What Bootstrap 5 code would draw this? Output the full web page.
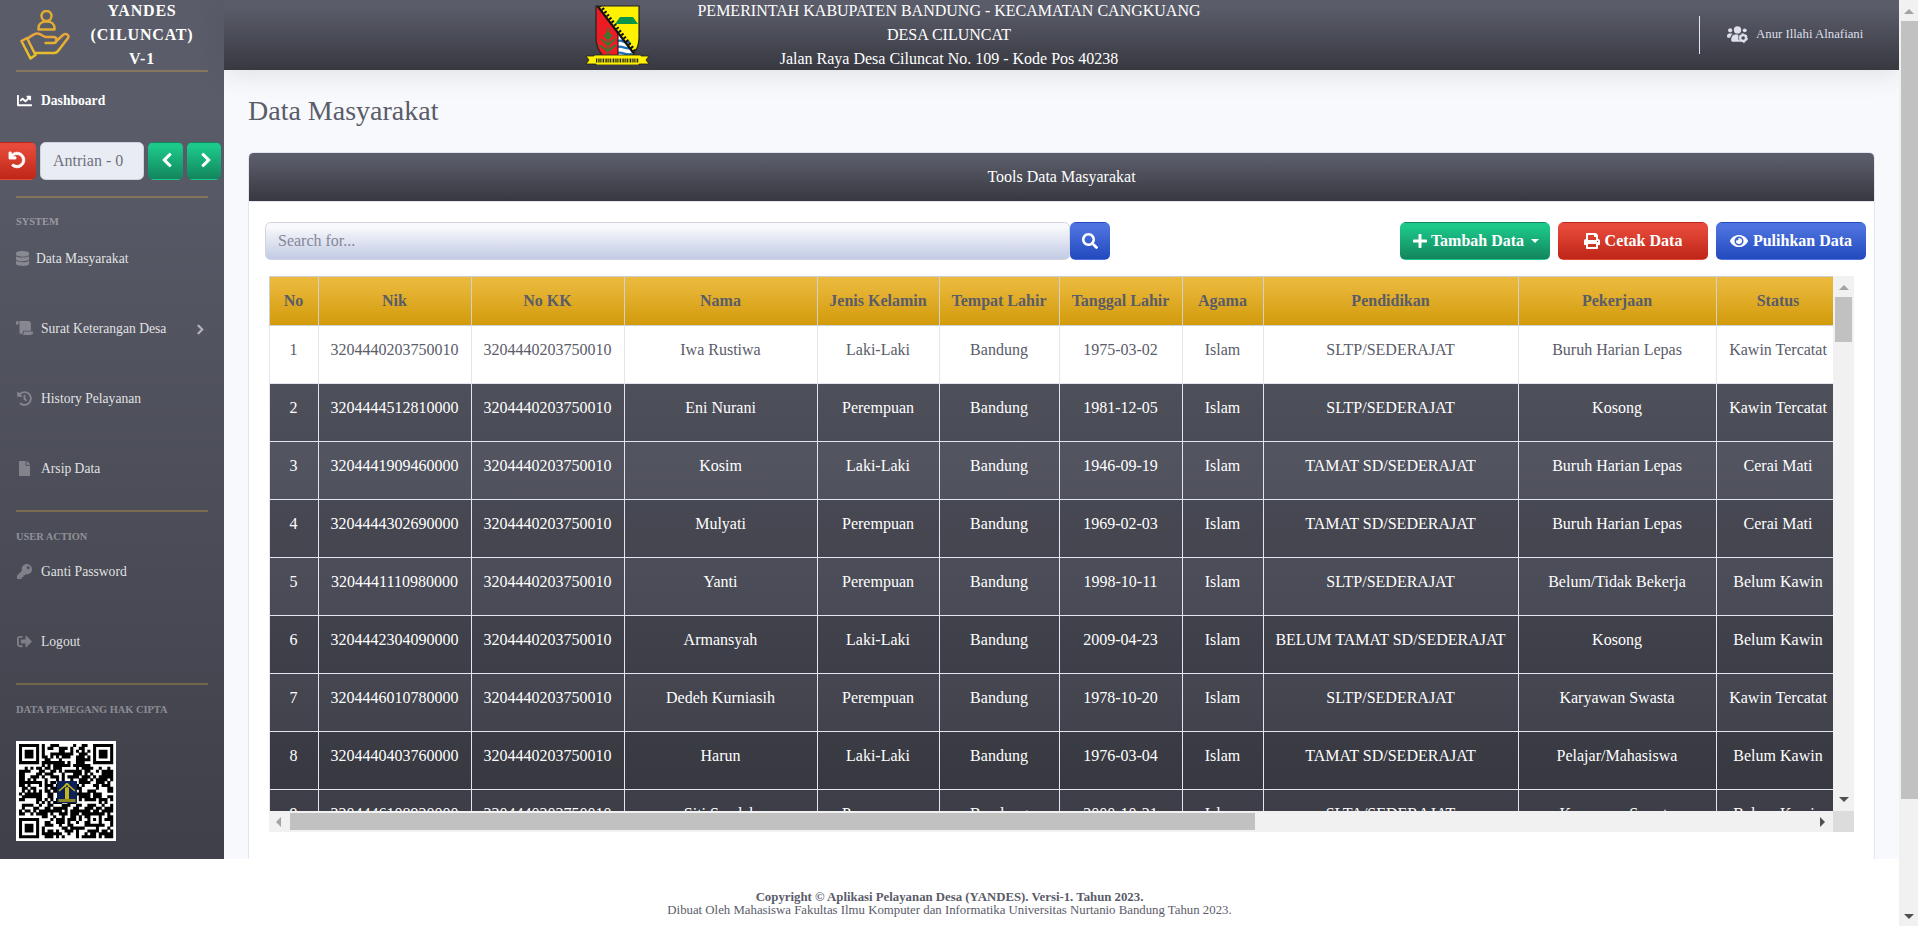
<!DOCTYPE html>
<html lang="id">
<head>
<meta charset="utf-8">
<title>YANDES - Data Masyarakat</title>
<link rel="stylesheet" href="https://cdn.jsdelivr.net/npm/bootstrap@5.3.0/dist/css/bootstrap.min.css">
<style>
body{font-family:"Liberation Serif","Times New Roman",serif;font-size:16px;line-height:24px;color:#5a5c69;background:#fff;height:926px;overflow:hidden}
svg.ic{fill:currentColor;display:inline-block;height:1em;flex:none}
svg.bold{stroke:currentColor;stroke-width:28;overflow:visible}
.viewport{height:926px}
.upper{height:859px;overflow:hidden;background:#f8f9fc}
.side{width:224px;height:1062px;background:linear-gradient(180deg,#5a5c69 10%,#373840 100%);flex:none}
.brand{height:70px;color:#fff;font-weight:700;letter-spacing:.8px}
.brand-name{width:144px;margin-top:-1px}
.rule{height:2px;margin:0 16px;background:#f6c23e;opacity:.27}
.item{height:70px;padding-left:16px;padding-top:2px;font-size:13.6px;color:rgba(255,255,255,.85)}
.item .ib{width:17px;margin-right:8px;display:flex;justify-content:center;color:rgba(255,255,255,.3);font-size:15px;margin-top:-2px}
.heading{height:16px;line-height:17px;padding-left:16px;font-size:10.4px;font-weight:700;color:rgba(255,255,255,.4)}
.btn{--bs-btn-border-color:transparent;color:#fff!important;border-radius:5.6px}
.g-green{background:linear-gradient(180deg,#1cc88a 10%,#13855c 100%)}
.g-red{background:linear-gradient(180deg,#e74a3b 10%,#be2617 100%)}
.g-blue{background:linear-gradient(180deg,#4e73df 10%,#224abe 100%)}
.g-dark{background:linear-gradient(180deg,#5a5c69 10%,#373840 100%)}
.queue{height:38px;margin:14px 0 16px -6px}
.queue .btn{height:38px;padding:0 0 2px;display:flex;align-items:center;justify-content:center}
.queue .field{width:104px;height:38px;margin:0 4px;padding:6px 12px;background:#eaecf4;border:1px solid #d1d3e2;border-radius:5.6px;color:#6e707e}
.topbar{height:70px;color:#fff;box-shadow:0 .15rem 1.75rem 0 rgba(58,59,69,.15)}
.crest{width:67px;height:60px;margin-left:360px}
.office{width:510px;margin-left:43px}
.user{margin-left:auto;border-left:1px solid #e3e6f0;height:38px;width:200px;padding-left:27px;padding-bottom:2px;font-size:12.8px;color:#dddfeb}
.title{font-size:28px;line-height:34px;margin:24px 0 24px;padding-left:24px}
.panel{width:1627px;height:900px;margin-left:24px;border:1px solid #e3e6f0;border-radius:5.6px;background:#fff;overflow:hidden}
.panel-top{height:49px;line-height:48px;border-bottom:1px solid #e3e6f0;color:#fff}
.searchbox{width:805px;height:38px;border:1px solid #d1d3e2;border-radius:5.6px;padding:6px 12px;background:linear-gradient(180deg,#f8f9fc 10%,#c2cbe5 100%);color:#858796}
.tool{width:150px;height:38px;font-weight:700;padding:0;display:flex;align-items:center;justify-content:center;gap:5px}
.tool.dropdown-toggle{gap:4px;padding-left:2px}
.tool.dropdown-toggle::after{margin-left:3px}
.scroller{display:grid;grid-template-columns:1564px 21px;grid-template-rows:535px 21px;width:1585px;margin-left:20px}
.win{overflow:hidden}
.data{width:1571px;table-layout:fixed;border-collapse:collapse;text-align:center;white-space:nowrap}
.data th,.data td{border:1px solid #e3e6f0;padding:12px 1px 12px 0;vertical-align:top}
.data thead tr{height:49px;background:linear-gradient(180deg,#eab83b 10%,#d29a0a 100%)}
.data thead th{border-color:#cfd0d2;line-height:24px}
.data tbody{background:linear-gradient(180deg,#5a5c69,#373840) 0 0/100% 580px no-repeat;color:#fff}
.data tbody tr{height:58px}
.data tbody tr:first-child td{background:#fff;color:#5a5c69}
.data tbody tr:nth-child(even) td{background:rgba(0,0,0,.1)}
.bar{background:#f1f1f1;display:flex}
.bar.v{flex-direction:column;align-items:center}
.bar.h{align-items:center}
.thumb{background:#c1c1c1}
.arr{width:0;height:0;border:5px solid transparent}
.up{border-top:0;border-bottom:5px solid #a3a3a3}
.dn{border-bottom:0;border-top:5px solid #505050}
.lf{border-left:0;border-right:5px solid #a3a3a3}
.rt{border-right:0;border-left:5px solid #505050}
.pagebar{width:19px;height:926px;flex:none}
.foot{height:67px;padding-top:32px;font-size:12.8px;line-height:12.8px}
</style>
</head>
<body>
<svg class="d-none">
<symbol id="undo" viewBox="0 0 512 512" overflow="visible"><path d="M212.333 224.333H12c-6.627 0-12-5.373-12-12V12C0 5.373 5.373 0 12 0h48c6.627 0 12 5.373 12 12v78.112C117.773 39.279 184.26 7.47 258.175 8.007c136.906.994 246.448 111.623 246.157 248.532C504.041 393.258 393.12 504 256.333 504c-64.089 0-122.496-24.313-166.51-64.215-5.099-4.622-5.334-12.554-.467-17.42l33.967-33.967c4.474-4.474 11.662-4.717 16.401-.525C170.76 415.336 211.58 432 256.333 432c97.268 0 176-78.716 176-176 0-97.267-78.716-176-176-176-58.496 0-110.28 28.476-142.274 72.333h98.274c6.627 0 12 5.373 12 12v48c0 6.627-5.373 12-12 12z"/></symbol>
<symbol id="chev" viewBox="0 0 320 512" overflow="visible"><path d="M285.476 272.971L91.132 467.314c-9.373 9.373-24.569 9.373-33.941 0l-22.667-22.667c-9.357-9.357-9.375-24.522-.04-33.901L188.505 256 34.484 101.255c-9.335-9.379-9.317-24.544.04-33.901l22.667-22.667c9.373-9.373 24.569-9.373 33.941 0L285.475 239.03c9.373 9.372 9.373 24.568.001 33.941z"/></symbol>
</svg>
<div class="viewport d-flex">
 <div class="flex-grow-1">
  <div class="upper d-flex">
   <nav class="side">
    <div class="brand d-flex">
     <svg width="50" height="50" viewBox="0 0 50 50" style="margin:10px 0 0 20px;flex:none" fill="none" stroke-width="2.5" stroke-linejoin="round" stroke-linecap="round">
      <defs><linearGradient id="gold" x1="0" y1="0" x2="0" y2="1"><stop offset="0" stop-color="#e8a33a"/><stop offset="1" stop-color="#e6c526"/></linearGradient></defs>
      <g stroke="#e2ac30"><circle cx="26.500" cy="6" r="5"/><path d="M18.500 19.500v-1.500c0-4 3.500-6.500 8-6.500s8 2.500 8 6.500v1.500z"/></g>
      <path stroke="url(#gold)" d="M1.500 31l5.500-3 8.500 17-5 3.500zM7.500 28.500c4-3 7-5 10-5 4 0 5 3.500 9 3.500h7c4 0 4 6 0 6h-8M37 30.500l6-5.500c3-2.500 6.500 0 5 3L38 41c-1 1.500-2 2-4 2H15.500"/>
     </svg>
     <div class="brand-name text-center">YANDES<br>(CILUNCAT)<br>V-1</div>
    </div>
    <div class="rule"></div>
    <div class="item d-flex align-items-center fw-bold text-white" style="height:56px"><span class="ib text-white"><svg class="ic" viewBox="0 0 512 512"><path d="M496 384H64V80c0-8.840-7.160-16-16-16H16C7.160 64 0 71.160 0 80v336c0 17.670 14.330 32 32 32h464c8.840 0 16-7.160 16-16v-32c0-8.840-7.160-16-16-16zM464 96H345.940c-21.380 0-32.090 25.850-16.970 40.970l32.400 32.400L288 242.750l-73.370-73.370c-12.500-12.500-32.760-12.500-45.250 0l-68.690 68.690c-6.250 6.250-6.250 16.380 0 22.630l22.620 22.620c6.250 6.250 16.380 6.250 22.630 0L192 237.250l73.370 73.370c12.500 12.500 32.760 12.500 45.250 0l96-96 32.400 32.400c15.120 15.120 40.970 4.410 40.970-16.970V112c.010-8.840-7.150-16-15.990-16z"/></svg></span>Dashboard</div>
    <div class="queue d-flex">
     <a class="btn g-red" style="width:42px;padding-left:4px"><svg class="ic bold" viewBox="0 0 512 512"><use href="#undo"/></svg></a>
     <div class="field">Antrian - 0</div>
     <a class="btn g-green" style="width:35px;margin-right:4px;padding-left:2px"><svg class="ic bold" viewBox="0 0 320 512" style="transform:scaleX(-1)"><use href="#chev"/></svg></a>
     <a class="btn g-green" style="width:34px;padding-left:3px"><svg class="ic bold" viewBox="0 0 320 512"><use href="#chev"/></svg></a>
    </div>
    <div class="rule"></div>
    <div class="heading" style="margin-top:15px">SYSTEM</div>
    <div class="item d-flex align-items-center" style="height:58px;margin-bottom:6px"><span class="ib" style="width:13px;margin-right:7px"><svg class="ic" viewBox="0 0 448 512"><path d="M448 73.143v45.714C448 159.143 347.667 192 224 192S0 159.143 0 118.857V73.143C0 32.857 100.333 0 224 0s224 32.857 224 73.143zM448 176v102.857C448 319.143 347.667 352 224 352S0 319.143 0 278.857V176c48.125 33.143 136.208 48.572 224 48.572S399.874 209.143 448 176zm0 160v102.857C448 479.143 347.667 512 224 512S0 479.143 0 438.857V336c48.125 33.143 136.208 48.572 224 48.572S399.874 369.143 448 336z"/></svg></span>Data Masyarakat</div>
    <div class="item d-flex align-items-center"><span class="ib"><svg class="ic" viewBox="0 0 640 512" style="height:14px"><path d="M48 0C21.530 0 0 21.530 0 48v64c0 8.840 7.160 16 16 16h80V48C96 21.530 74.470 0 48 0zm208 412.570V352h288V96c0-52.940-43.060-96-96-96H111.590C121.740 13.410 128 29.920 128 48v368c0 38.870 34.650 69.650 74.750 63.120C234.220 474 256 444.460 256 412.570zM288 384v32c0 52.930-43.060 96-96 96h336c61.860 0 112-50.140 112-112 0-8.840-7.160-16-16-16H288z"/></svg></span>Surat Keterangan Desa<svg class="ic bold ms-auto" viewBox="0 0 320 512" style="height:11px;margin-right:20px;opacity:.65"><use href="#chev"/></svg></div>
    <div class="item d-flex align-items-center"><span class="ib"><svg class="ic" viewBox="0 0 512 512"><path d="M504 255.531c.253 136.640-111.180 248.372-247.820 248.468-59.015.042-113.223-20.530-155.822-54.911-11.077-8.940-11.905-25.541-1.839-35.607l11.267-11.267c8.609-8.609 22.353-9.551 31.891-1.984C173.062 425.135 212.781 440 256 440c101.705 0 184-82.311 184-184 0-101.705-82.311-184-184-184-48.814 0-93.149 18.969-126.068 49.932l50.754 50.754c10.080 10.080 2.941 27.314-11.313 27.314H24c-8.837 0-16-7.163-16-16V38.627c0-14.254 17.234-21.393 27.314-11.314l49.372 49.372C129.209 34.136 189.552 8 256 8c136.810 0 247.747 110.780 248 247.531zm-180.912 78.784l9.823-12.630c8.138-10.463 6.253-25.542-4.210-33.679L288 256.349V152c0-13.255-10.745-24-24-24h-16c-13.255 0-24 10.745-24 24v135.651l65.409 50.874c10.463 8.137 25.541 6.253 33.679-4.210z"/></svg></span>History Pelayanan</div>
    <div class="item d-flex align-items-center"><span class="ib"><svg class="ic" viewBox="0 0 384 512"><path d="M224 136V0H24C10.700 0 0 10.700 0 24v464c0 13.300 10.700 24 24 24h336c13.300 0 24-10.700 24-24V160H248c-13.200 0-24-10.800-24-24zm160-14.100v6.100H256V0h6.100c6.400 0 12.500 2.500 17 7l97.900 98c4.500 4.500 7 10.600 7 16.900z"/></svg></span>Arsip Data</div>
    <div class="rule" style="margin-top:7px"></div>
    <div class="heading" style="margin-top:16px">USER ACTION</div>
    <div class="item d-flex align-items-center" style="height:54px;margin-bottom:8px"><span class="ib"><svg class="ic" viewBox="0 0 512 512"><path d="M512 176.001C512 273.203 433.202 352 336 352c-11.220 0-22.190-1.062-32.827-3.069l-24.012 27.014A23.999 23.999 0 0 1 261.223 384H224v40c0 13.255-10.745 24-24 24h-40v40c0 13.255-10.745 24-24 24H24c-13.255 0-24-10.745-24-24v-78.059c0-6.365 2.529-12.470 7.029-16.971l161.802-161.802C163.108 213.814 160 195.271 160 176 160 78.798 238.797.001 335.999 0 433.488-.001 512 78.511 512 176.001zM336 128c0 26.510 21.490 48 48 48s48-21.490 48-48-21.490-48-48-48-48 21.490-48 48z"/></svg></span>Ganti Password</div>
    <div class="item d-flex align-items-center"><span class="ib"><svg class="ic" viewBox="0 0 512 512"><path d="M497 273L329 441c-15 15-41 4.500-41-17v-96H152c-13.300 0-24-10.700-24-24v-96c0-13.300 10.700-24 24-24h136V88c0-21.400 25.900-32 41-17l168 168c9.300 9.400 9.300 24.600 0 34zM192 436v-40c0-6.600-5.400-12-12-12H96c-17.700 0-32-14.300-32-32V160c0-17.700 14.300-32 32-32h84c6.600 0 12-5.400 12-12V76c0-6.600-5.400-12-12-12H96c-53 0-96 43-96 96v192c0 53 43 96 96 96h84c6.600 0 12-5.400 12-12z"/></svg></span>Logout</div>
    <div class="rule" style="margin-top:7px"></div>
    <div class="heading" style="margin-top:16px">DATA PEMEGANG HAK CIPTA</div>
    <svg id="qr" class="d-block" width="100" height="100" viewBox="0 0 100 100" style="margin:24px 0 0 16px"><rect width="100" height="100" fill="#fff"/><path id="qrm"/>
     <rect x="41" y="40" width="20" height="22" fill="#0b2158"/><g fill="none" stroke="#c4b51c"><path d="M43 50l8-7 8 7" stroke-width="1.600"/><circle cx="51" cy="44.500" r="2"/><path d="M51 47v12" stroke-width="4"/><path d="M42.500 59.500h17" stroke-width="3" stroke="#8d8725"/></g></svg>
   </nav>
   <main class="flex-grow-1">
    <header class="topbar g-dark d-flex align-items-center">
     <svg class="crest flex-shrink-0" viewBox="0 0 67 60">
      <defs><clipPath id="sh"><path d="M12 1h43v32c0 14-9 22-21.500 28C21 55 12 47 12 33z"/></clipPath></defs>
      <g clip-path="url(#sh)"><path fill="#fff200" d="M12 0h44v60H12z"/><path fill="#ed1c24" d="M12 0v60h22V28z"/><path fill="#fff" d="M34 28v32l16-8-2-8z"/><path stroke="#1c75bc" stroke-width="2.400" fill="none" d="M34 36c4-2 6 3 12 1M34 42c4-2 7 3 14 1M34 48c4-2 7 3 14 1M34 54c4-2 5 2 10 0"/><path stroke="#111" stroke-width="2.200" fill="none" d="M12-1l39 51"/><path stroke="#111" stroke-width="3" stroke-dasharray="2 2" fill="none" d="M16 0l38 50"/><path stroke="#111" d="M34 28v32"/></g>
      <path fill="#0a9447" d="M36 12h13l5 7H31z"/><path stroke="#2f7d32" stroke-width="1.800" fill="none" d="M24 23v32M24 27l-3 4M24 27l3 4M17 34l7 6 7-6M15 40l9 6 8-6M20 30l4 4 4-4"/>
      <path d="M12 1h43v32c0 14-9 22-21.500 28C21 55 12 47 12 33z" fill="none" stroke="#222" stroke-width="1.200"/>
      <path d="M2 51h8v-1h47v1h8l-3 4 3 4H55v1H12v-1H2l3-4z" fill="#fff200" stroke="#222" stroke-width=".8"/><path d="M12 55.500h43" stroke="#222" stroke-width="4" stroke-dasharray="1.300 .8 .7 .6"/>
     </svg>
     <div class="office text-center">PEMERINTAH KABUPATEN BANDUNG - KECAMATAN CANGKUANG<br>DESA CILUNCAT<br>Jalan Raya Desa Ciluncat No. 109 - Kode Pos 40238</div>
     <div class="user d-flex align-items-center"><svg class="ic" width="21" viewBox="0 0 640 512" style="height:17px;margin-right:8px"><circle cx="96" cy="130" r="64"/><circle cx="320" cy="116" r="112"/><circle cx="540" cy="130" r="60"/><path d="M0 320c0-60 30-96 64-96h64c20 0 34 6 46 18-38 24-66 62-72 110H32c-18 0-32-14-32-32zM128 432c0-100 40-176 128-176h96c-30 60-10 180 60 224H176c-26 0-48-22-48-48z"/><circle cx="492" cy="364" r="90" fill="none" stroke="currentColor" stroke-width="70"/><circle cx="492" cy="364" r="132" fill="none" stroke="currentColor" stroke-width="30" stroke-dasharray="70 68"/></svg>Anur Illahi Alnafiani</div>
    </header>
    <h1 class="title fw-normal">Data Masyarakat</h1>
    <section class="panel">
     <div class="panel-top g-dark text-center">Tools Data Masyarakat</div>
     <div class="d-flex" style="padding:20px 8px 16px 16px">
      <div class="searchbox">Search for...</div>
      <a class="btn g-blue p-0 d-flex align-items-center justify-content-center" style="width:40px;height:38px"><svg class="ic" viewBox="0 0 512 512"><path d="M505 442.700L405.300 343c-4.500-4.500-10.600-7-17-7H372c27.600-35.300 44-79.700 44-128C416 93.100 322.900 0 208 0S0 93.100 0 208s93.100 208 208 208c48.300 0 92.700-16.400 128-44v16.300c0 6.400 2.500 12.500 7 17l99.700 99.700c9.400 9.400 24.600 9.400 33.900 0l28.300-28.300c9.400-9.400 9.400-24.600.1-34zM208 336c-70.700 0-128-57.200-128-128 0-70.700 57.200-128 128-128 70.700 0 128 57.200 128 128 0 70.700-57.200 128-128 128z"/></svg></a>
      <div class="d-flex gap-2 ms-auto">
       <a class="btn tool g-green dropdown-toggle"><svg class="ic" viewBox="0 0 448 512"><path d="M416 208H272V64c0-17.670-14.330-32-32-32h-32c-17.670 0-32 14.330-32 32v144H32c-17.670 0-32 14.330-32 32v32c0 17.670 14.330 32 32 32h144v144c0 17.670 14.330 32 32 32h32c17.670 0 32-14.330 32-32V304h144c17.670 0 32-14.330 32-32v-32c0-17.670-14.330-32-32-32z"/></svg>Tambah Data</a>
       <a class="btn tool g-red"><svg class="ic" viewBox="0 0 512 512"><path d="M448 192V77.250c0-8.490-3.370-16.620-9.370-22.630L393.370 9.370c-6-6-14.140-9.370-22.630-9.370H96C78.330 0 64 14.330 64 32v160c-35.350 0-64 28.650-64 64v112c0 8.840 7.160 16 16 16h48v96c0 17.670 14.330 32 32 32h320c17.670 0 32-14.330 32-32v-96h48c8.840 0 16-7.160 16-16V256c0-35.350-28.650-64-64-64zm-64 256H128v-96h256v96zm0-224H128V64h192v48c0 8.840 7.160 16 16 16h48v96zm48 72c-13.250 0-24-10.750-24-24 0-13.260 10.750-24 24-24s24 10.740 24 24c0 13.250-10.750 24-24 24z"/></svg>Cetak Data</a>
       <a class="btn tool g-blue"><svg class="ic" viewBox="0 0 576 512"><path d="M572.520 241.400C518.290 135.590 410.930 64 288 64S57.680 135.640 3.480 241.410a32.350 32.350 0 0 0 0 29.190C57.710 376.410 165.070 448 288 448s230.320-71.640 284.520-177.410a32.350 32.350 0 0 0 0-29.190zM288 400a144 144 0 1 1 144-144 143.930 143.930 0 0 1-144 144zm0-240a95.310 95.310 0 0 0-25.310 3.790 47.850 47.850 0 0 1-66.900 66.900A95.780 95.780 0 1 0 288 160z"/></svg>Pulihkan Data</a>
      </div>
     </div>
     <div class="scroller">
      <div class="win"><table class="data">
       <colgroup><col style="width:49px"><col style="width:153px"><col style="width:153px"><col style="width:193px"><col style="width:122px"><col style="width:120px"><col style="width:123px"><col style="width:81px"><col style="width:255px"><col style="width:198px"><col style="width:124px"></colgroup>
       <thead><tr><th>No</th><th>Nik</th><th>No KK</th><th>Nama</th><th>Jenis Kelamin</th><th>Tempat Lahir</th><th>Tanggal Lahir</th><th>Agama</th><th>Pendidikan</th><th>Pekerjaan</th><th>Status</th></tr></thead>
       <tbody id="rows"></tbody></table></div>
      <div class="bar v"><i class="arr up" style="margin:9px 0 7px"></i><i class="thumb" style="width:17px;height:45px"></i><i class="arr dn" style="margin-top:auto;margin-bottom:9px"></i></div>
      <div class="bar h"><i class="arr lf" style="margin:0 9px 0 7px"></i><i class="thumb" style="width:965px;height:17px"></i><i class="arr rt" style="margin-left:auto;margin-right:8px"></i></div>
      <div style="background:#dcdcdc"></div>
     </div>
    </section>
   </main>
  </div>
  <footer class="foot text-center"><b>Copyright © Aplikasi Pelayanan Desa (YANDES). Versi-1. Tahun 2023.</b><br>Dibuat Oleh Mahasiswa Fakultas Ilmu Komputer dan Informatika Universitas Nurtanio Bandung Tahun 2023.</footer>
 </div>
 <div class="pagebar bar v"><i class="arr up" style="margin:9px 0 7px 1px"></i><i class="thumb align-self-end" style="width:17px;height:778px"></i><i class="arr dn" style="margin:auto 0 7px 1px"></i></div>
</div>
<script>
const data=[
["3204440203750010","Iwa Rustiwa","Laki-Laki","1975-03-02","SLTP/SEDERAJAT","Buruh Harian Lepas","Kawin Tercatat"],
["3204444512810000","Eni Nurani","Perempuan","1981-12-05","SLTP/SEDERAJAT","Kosong","Kawin Tercatat"],
["3204441909460000","Kosim","Laki-Laki","1946-09-19","TAMAT SD/SEDERAJAT","Buruh Harian Lepas","Cerai Mati"],
["3204444302690000","Mulyati","Perempuan","1969-02-03","TAMAT SD/SEDERAJAT","Buruh Harian Lepas","Cerai Mati"],
["3204441110980000","Yanti","Perempuan","1998-10-11","SLTP/SEDERAJAT","Belum/Tidak Bekerja","Belum Kawin"],
["3204442304090000","Armansyah","Laki-Laki","2009-04-23","BELUM TAMAT SD/SEDERAJAT","Kosong","Belum Kawin"],
["3204446010780000","Dedeh Kurniasih","Perempuan","1978-10-20","SLTP/SEDERAJAT","Karyawan Swasta","Kawin Tercatat"],
["3204440403760000","Harun","Laki-Laki","1976-03-04","TAMAT SD/SEDERAJAT","Pelajar/Mahasiswa","Belum Kawin"],
["3204446108920000","Siti Saodah","Perempuan","2000-10-21","SLTA/SEDERAJAT","Karyawan Swasta","Belum Kawin"]];
document.getElementById('rows').innerHTML=data.map((r,i)=>'<tr>'+[i+1,r[0],"3204440203750010",r[1],r[2],"Bandung",r[3],"Islam",r[4],r[5],r[6]].map(c=>`<td>${c}</td>`).join('')+'</tr>').join('');
// QR modules: three finder squares, one alignment square, data in between
const N=33,m=94/N;let seed=7,d='';
const ring=(x,y,cx,cy,R)=>{const k=Math.max(Math.abs(x-cx),Math.abs(y-cy));return k>R?null:(R==4?(k==3||k<2):(k==2||k==0));};
for(let y=0;y<N;y++)for(let x=0;x<N;x++){
 seed=(seed*1103515245+12345)&0x7fffffff;
 let on=(seed>>16)%100<58;
 for(const [a,b,R] of [[3,3,4],[N-4,3,4],[3,N-4,4],[N-7,N-7,2]]){const v=ring(x,y,a,b,R);if(v!==null)on=v;}
 if(on)d+=`M${(3+x*m).toFixed(2)} ${(3+y*m).toFixed(2)}h${(m+.2).toFixed(2)}v${(m+.2).toFixed(2)}h-${(m+.2).toFixed(2)}z`;
}
document.getElementById('qrm').setAttribute('d',d);
</script>
<script src="https://cdn.jsdelivr.net/npm/bootstrap@5.3.0/dist/js/bootstrap.bundle.min.js"></script>
</body>
</html>
